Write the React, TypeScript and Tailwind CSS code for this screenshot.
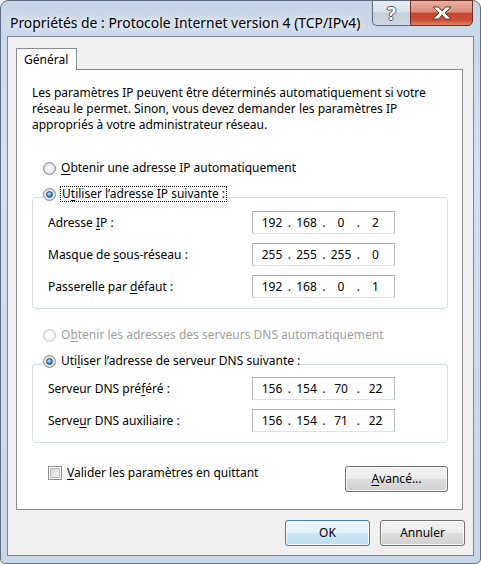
import React from 'react';

const U: React.FC<{ children: React.ReactNode }> = ({ children }) => (
    <span className="underline decoration-1 underline-offset-[2px]">{children}</span>
);

const Radio: React.FC<{ checked?: boolean; disabled?: boolean }> = ({ checked, disabled }) => (
    <span
        className={`flex h-[13px] w-[13px] shrink-0 items-center justify-center rounded-full border ${
            disabled
                ? 'border-[#c6c6c6] bg-[radial-gradient(circle,#fbfbfb_35%,#ededed_75%,#f6f6f6_100%)]'
                : 'border-[#8a8a8a] bg-[radial-gradient(circle,#f6f6f6_35%,#d4d4d4_75%,#efefef_100%)]'
        }`}
    >
        {checked && (
            <span className="h-[7px] w-[7px] rounded-full border border-[#1b4f7e] bg-[radial-gradient(circle_at_40%_35%,#c8f2ff_0%,#3aa6e2_45%,#0c5a9b_100%)]" />
        )}
    </span>
);

const IpField: React.FC<{ parts: string[] }> = ({ parts }) => (
    <div className="flex h-[23px] w-[143px] items-center border border-[#b5b9c0] border-t-[#abadb3] border-b-[#dfe3e8] bg-white pl-[4px] text-[12px]">
        {parts.map((p, i) => (
            <React.Fragment key={i}>
                <span className="w-[30px] text-center">{p}</span>
                {i < 3 && <span className="w-[4.5px] text-center">.</span>}
            </React.Fragment>
        ))}
    </div>
);

const Row: React.FC<{ label: React.ReactNode; parts: string[] }> = ({ label, parts }) => (
    <div className="flex h-[23px] items-center">
        <span className="w-[204px]">{label}</span>
        <IpField parts={parts} />
    </div>
);

const btn =
    'flex h-[26px] w-[85px] items-center justify-center rounded-[3px] border text-[12px] shadow-[inset_0_0_0_1px_rgba(255,255,255,0.8)]';
const btnNormal =
    'border-[#707070] bg-[linear-gradient(180deg,#f3f3f3_0%,#ececec_48%,#dddddd_52%,#d0d0d0_100%)]';
const btnDefault =
    'border-[#3c7fb1] bg-[linear-gradient(180deg,#eef7fd_0%,#e0f1fb_48%,#cbe7f8_52%,#bcdcf1_100%)]';

export default function App() {
    return (
        <div className="flex h-[564px] w-[481px] flex-col rounded-t-[8px] rounded-b-[5px] border border-[#5d6f84] bg-[linear-gradient(180deg,#c7d6e7_0%,#d6e2ef_30%,#cddbea_60%,#c8d7e8_100%)] px-[6px] pb-[7px] font-['Segoe_UI','Noto_Sans',sans-serif] text-black">
            {/* title bar */}
            <div className="flex h-[35px] items-start justify-between">
                <span className="whitespace-nowrap pl-[3px] pt-[12px] text-[13.9px] leading-[20px] [text-shadow:0_0_10px_#ffffff,0_0_6px_#ffffff]">
                    Propriétés de : Protocole Internet version 4 (TCP/IPv4)
                </span>
                <div className="-mt-px mr-[1px] flex h-[26px] shrink-0">
                    <div className="flex w-[38px] items-center justify-center rounded-bl-[5px] border border-r-0 border-[#5b6a7c] bg-[linear-gradient(180deg,#e9eef4_0%,#dbe2ea_45%,#c5cfdb_50%,#ccd6e1_100%)] text-[18px] font-bold leading-none text-white [text-shadow:1px_0_#4f5b68,-1px_0_#4f5b68,0_1px_#4f5b68,0_-1px_#4f5b68]">
                        ?
                    </div>
                    <div className="flex w-[63px] items-center justify-center rounded-br-[5px] border border-[#6a2f25] bg-[linear-gradient(180deg,#eab0a2_0%,#de8d78_45%,#c8452d_52%,#cc5036_80%,#e08565_100%)]">
                        <svg width="22" height="14" viewBox="0 0 22 14">
                            <path
                                d="M2 1 H7.5 L11 5 L14.5 1 H20 L14 7 L20 13 H14.5 L11 9 L7.5 13 H2 L8 7 Z"
                                fill="#ffffff"
                                stroke="#5b3a34"
                                strokeWidth="1"
                                strokeLinejoin="round"
                            />
                        </svg>
                    </div>
                </div>
            </div>

            {/* client area */}
            <div className="flex flex-1 flex-col border border-[#7c8898] bg-[#f0f0f0] pt-[11px] text-[12px]">
                <div className="ml-[8px] flex">
                    <div className="relative z-10 -mb-px flex h-[22px] w-[61px] items-center border border-b-0 border-[#898c95] bg-white pl-[7px]">
                        Général
                    </div>
                </div>
                <div className="ml-[8px] w-[447px] border border-[#898c95] bg-white pb-[17px] pl-[15px] pr-[14px] pt-[15px] leading-[16px]">
                    <p className="whitespace-nowrap">
                        Les paramètres IP peuvent être déterminés automatiquement si votre
                        <br />
                        réseau le permet. Sinon, vous devez demander les paramètres IP
                        <br />
                        appropriés à votre administrateur réseau.
                    </p>

                    <div className="ml-[11px] mt-[27px] flex h-[16px] items-center gap-[5px]">
                        <Radio />
                        <span>
                            <U>O</U>btenir une adresse IP automatiquement
                        </span>
                    </div>

                    <fieldset className="mt-[10px] rounded-[3px] border border-[#d5dfe5] pb-[10px] pl-[10px]">
                        <legend className="h-[22px] p-0">
                            <div className="flex h-[16px] items-center gap-[4px]">
                                <Radio checked />
                                <span className="border border-dotted border-black px-[1px] leading-[14px]">
                                    U<U>t</U>iliser l’adresse IP suivante :
                                </span>
                            </div>
                        </legend>
                        <div className="mt-[3px] flex flex-col gap-[9px] pl-[5px]">
                            <Row label={<>Adresse <U>I</U>P :</>} parts={['192', '168', '0', '2']} />
                            <Row label={<>Masque de <U>s</U>ous-réseau :</>} parts={['255', '255', '255', '0']} />
                            <Row label={<>Passerelle par <U>d</U>éfaut :</>} parts={['192', '168', '0', '1']} />
                        </div>
                    </fieldset>

                    <div className="ml-[11px] mt-[18px] flex h-[16px] items-center gap-[5px] text-[#a0a0a0]">
                        <Radio disabled />
                        <span>
                            O<U>b</U>tenir les adresses des serveurs DNS automatiquement
                        </span>
                    </div>

                    <fieldset className="mt-[10px] rounded-[3px] border border-[#d5dfe5] pb-[10px] pl-[10px]">
                        <legend className="h-[22px] p-0">
                            <div className="flex h-[16px] items-center gap-[5px]">
                                <Radio checked />
                                <span>
                                    Uti<U>l</U>iser l’adresse de serveur DNS suivante :
                                </span>
                            </div>
                        </legend>
                        <div className="mt-[2px] flex flex-col gap-[9px] pl-[5px]">
                            <Row label={<>Serveur DNS pré<U>f</U>éré :</>} parts={['156', '154', '70', '22']} />
                            <Row label={<>Serve<U>u</U>r DNS auxiliaire :</>} parts={['156', '154', '71', '22']} />
                        </div>
                    </fieldset>

                    <div className="mt-[23px] flex items-start justify-between">
                        <div className="ml-[16px] flex h-[14px] items-center gap-[5px]">
                            <span className="flex h-[14px] w-[14px] items-center justify-center border border-[#8e8f8f] bg-white">
                                <span className="h-[10px] w-[10px] border border-[#b8bcc2] bg-[linear-gradient(135deg,#cfd2d6_0%,#e9eaec_60%,#f7f7f7_100%)]" />
                            </span>
                            <span>
                                <U>V</U>alider les paramètres en quittant
                            </span>
                        </div>
                        <button className={`${btn} ${btnNormal} w-[103px]`}>
                            <span>
                                <U>A</U>vancé...
                            </span>
                        </button>
                    </div>
                </div>

                <div className="mt-[10px] flex justify-end gap-[10px] pr-[8px]">
                    <button className={`${btn} ${btnDefault}`}>OK</button>
                    <button className={`${btn} ${btnNormal}`}>Annuler</button>
                </div>
            </div>
        </div>
    );
}
